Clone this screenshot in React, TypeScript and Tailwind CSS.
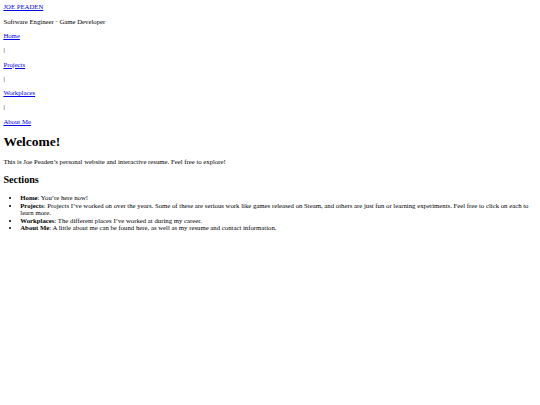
const links = ["Home", "Projects", "Workplaces", "About Me"];

const sections = [
  { name: "Home", text: "You’re here now!" },
  {
    name: "Projects",
    text: "Projects I’ve worked on over the years. Some of these are serious work like games released on Steam, and others are just fun or learning experiments. Feel free to click on each to learn more.",
  },
  { name: "Workplaces", text: "The different places I’ve worked at during my career." },
  { name: "About Me", text: "A little about me can be found here, as well as my resume and contact information." },
];

const App = () => {
  return (
    <div className="min-h-screen bg-white p-[3.375px] text-[6.75px] leading-[1.12] text-black font-['Liberation_Serif',serif]">
      <header>
        <a href="#" className="text-[#0000ee] underline">
          JOE PEADEN
        </a>
        <p className="my-[1em]">Software Engineer · Game Developer</p>
        <nav>
          {links.map((l, i) => (
            <div key={l}>
              {i > 0 && <p className="my-[1em]">|</p>}
              <p className="my-[1em]">
                <a href="#" className="text-[#0000ee] underline">
                  {l}
                </a>
              </p>
            </div>
          ))}
        </nav>
      </header>

      <main>
        <h1 className="my-[0.67em] text-[2em] leading-[1.12] font-bold">Welcome!</h1>
        <p className="my-[1em]">
          This is Joe Peaden’s personal website and interactive resume. Feel free to explore!
        </p>
        <h2 className="my-[0.83em] text-[1.5em] leading-[1.12] font-bold">Sections</h2>
        <ul className="my-[1em] list-disc pl-[16.875px]">
          {sections.map((s) => (
            <li key={s.name}>
              <b>{s.name}</b>: {s.text}
            </li>
          ))}
        </ul>
      </main>
    </div>
  );
};

export default App;
